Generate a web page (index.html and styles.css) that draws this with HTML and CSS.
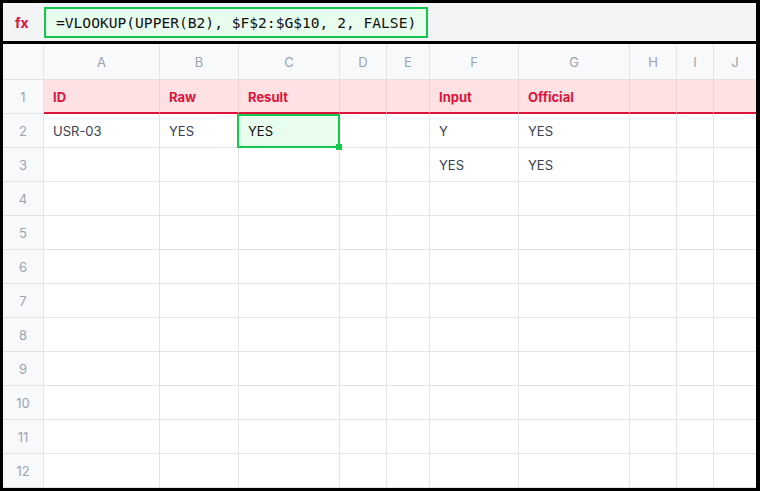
FILE: index.html
```html
<!DOCTYPE html>
<html>
<head>
<meta charset="utf-8">
<link rel="stylesheet" href="styles.css">
</head>
<body>
<div class="frame">
  <div class="fbar">
    <span class="fx">fx</span>
    <div class="finput">=VLOOKUP(UPPER(B2), $F$2:$G$10, 2, FALSE)</div>
  </div>
  <div class="grid">
    <div class="c rh ch"></div>
    <div class="c ch">A</div><div class="c ch">B</div><div class="c ch">C</div><div class="c ch">D</div><div class="c ch">E</div><div class="c ch">F</div><div class="c ch">G</div><div class="c ch">H</div><div class="c ch">I</div><div class="c ch">J</div>

    <div class="c rh r1h">1</div>
    <div class="c hd">ID</div><div class="c hd">Raw</div><div class="c hd">Result</div><div class="c hd"></div><div class="c hd"></div><div class="c hd">Input</div><div class="c hd">Official</div><div class="c hd"></div><div class="c hd"></div><div class="c hd"></div>

    <div class="c rh">2</div>
    <div class="c">USR-03</div><div class="c">YES</div><div class="c sel">YES<span class="selbox"><span class="handle"></span></span></div><div class="c"></div><div class="c"></div><div class="c">Y</div><div class="c">YES</div><div class="c"></div><div class="c"></div><div class="c"></div>

    <div class="c rh">3</div>
    <div class="c"></div><div class="c"></div><div class="c"></div><div class="c"></div><div class="c"></div><div class="c">YES</div><div class="c">YES</div><div class="c"></div><div class="c"></div><div class="c"></div>

    <div class="c rh">4</div><div class="c"></div><div class="c"></div><div class="c"></div><div class="c"></div><div class="c"></div><div class="c"></div><div class="c"></div><div class="c"></div><div class="c"></div><div class="c"></div>
    <div class="c rh">5</div><div class="c"></div><div class="c"></div><div class="c"></div><div class="c"></div><div class="c"></div><div class="c"></div><div class="c"></div><div class="c"></div><div class="c"></div><div class="c"></div>
    <div class="c rh">6</div><div class="c"></div><div class="c"></div><div class="c"></div><div class="c"></div><div class="c"></div><div class="c"></div><div class="c"></div><div class="c"></div><div class="c"></div><div class="c"></div>
    <div class="c rh">7</div><div class="c"></div><div class="c"></div><div class="c"></div><div class="c"></div><div class="c"></div><div class="c"></div><div class="c"></div><div class="c"></div><div class="c"></div><div class="c"></div>
    <div class="c rh">8</div><div class="c"></div><div class="c"></div><div class="c"></div><div class="c"></div><div class="c"></div><div class="c"></div><div class="c"></div><div class="c"></div><div class="c"></div><div class="c"></div>
    <div class="c rh">9</div><div class="c"></div><div class="c"></div><div class="c"></div><div class="c"></div><div class="c"></div><div class="c"></div><div class="c"></div><div class="c"></div><div class="c"></div><div class="c"></div>
    <div class="c rh">10</div><div class="c"></div><div class="c"></div><div class="c"></div><div class="c"></div><div class="c"></div><div class="c"></div><div class="c"></div><div class="c"></div><div class="c"></div><div class="c"></div>
    <div class="c rh">11</div><div class="c"></div><div class="c"></div><div class="c"></div><div class="c"></div><div class="c"></div><div class="c"></div><div class="c"></div><div class="c"></div><div class="c"></div><div class="c"></div>
    <div class="c rh">12</div><div class="c"></div><div class="c"></div><div class="c"></div><div class="c"></div><div class="c"></div><div class="c"></div><div class="c"></div><div class="c"></div><div class="c"></div><div class="c"></div>
  </div>
</div>
</body>
</html>
```
FILE: styles.css
```css
* { box-sizing: border-box; }
html, body { margin: 0; padding: 0; background: #000; }
body { font-family: Inter, "Noto Sans", sans-serif; }
.frame {
  width: 760px;
  height: 491px;
  border: 3px solid #000;
  border-right-width: 4px;
  background: #fff;
  overflow: hidden;
  display: flex;
  flex-direction: column;
}
.fbar {
  height: 41px;
  flex: none;
  background: #f3f4f6;
  border-bottom: 3px solid #000;
  display: flex;
  align-items: center;
  padding-left: 12px;
}
.fx {
  color: #dc143c;
  font-weight: 700;
  font-size: 14px;
  width: 29px;
  font-family: Inter, sans-serif;
}
.finput {
  width: 384px;
  height: 31px;
  margin-top: 1px;
  border: 2px solid #12c94c;
  background: #e8fdee;
  font-family: "DejaVu Sans Mono", monospace;
  font-size: 14.6px;
  color: #111;
  display: flex;
  align-items: center;
  padding-left: 10px;
  white-space: nowrap;
}
.grid {
  display: grid;
  grid-template-columns: 41px 116px 79px 101px 47px 43px 89px 111px 47px 37px 43px;
  grid-template-rows: 36px 34px repeat(11, 34px);
}
.c {
  border-right: 1px solid #e3e4e8;
  border-bottom: 1px solid #e3e4e8;
  font-size: 13px;
  color: #374151;
  display: flex;
  align-items: center;
  padding-left: 9px;
  white-space: nowrap;
}
.rh {
  background: #f8f9fb;
  color: #9ca3af;
  justify-content: center;
  padding-left: 0;
}
.ch {
  background: #f8f9fb;
  color: #9ca3af;
  justify-content: center;
  padding-left: 0;
}
.hd {
  background: #fde1e3;
  color: #dc143c;
  font-weight: 700;
  border-bottom: 2px solid #dc143c;
  border-right-color: #f3cfd3;
  padding-top: 1px;
}
.r1h { border-bottom: 1px solid #e3e4e8; }
.sel {
  position: relative;
  background: #e8fdee;
  color: #111;
}
.selbox {
  position: absolute;
  top: 0;
  left: -2px;
  right: -1px;
  bottom: -1px;
  border: 2px solid #12c94c;
}
.handle {
  position: absolute;
  right: -4px;
  bottom: -4px;
  width: 6px;
  height: 6px;
  background: #12c94c;
}
```
